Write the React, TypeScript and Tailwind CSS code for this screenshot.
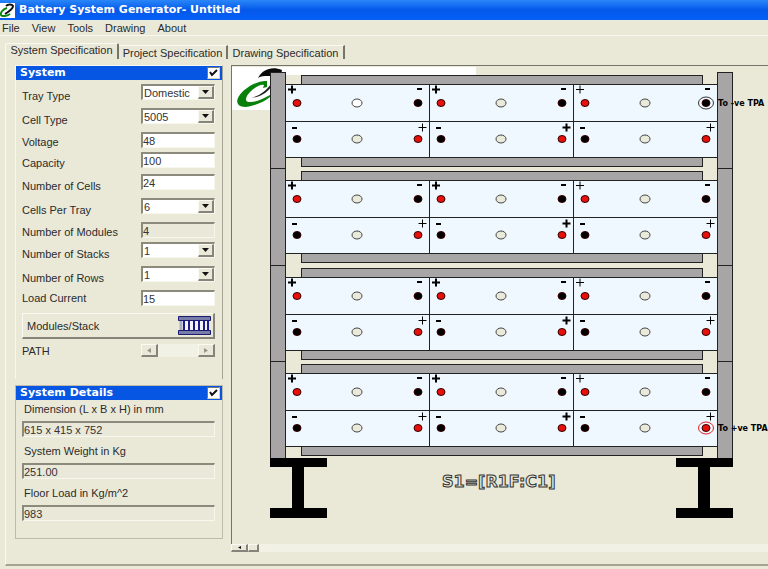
import React from "react";

type Field = {
  id: string;
  label: string;
  value: string;
  kind: "select" | "text" | "readonly";
  row: string;
};

const fields: Field[] = [
  { id: "tray-type", label: "Tray Type", value: "Domestic", kind: "select", row: "h-6" },
  { id: "cell-type", label: "Cell Type", value: "5005", kind: "select", row: "h-6" },
  { id: "voltage", label: "Voltage", value: "48", kind: "text", row: "h-5" },
  { id: "capacity", label: "Capacity", value: "100", kind: "text", row: "h-[22px]" },
  { id: "cells", label: "Number of Cells", value: "24", kind: "text", row: "h-6" },
  { id: "per-tray", label: "Cells Per Tray", value: "6", kind: "select", row: "h-6" },
  { id: "modules", label: "Number of Modules", value: "4", kind: "readonly", row: "h-5" },
  { id: "stacks", label: "Number of Stacks", value: "1", kind: "select", row: "h-6" },
  { id: "rows", label: "Number of Rows", value: "1", kind: "select", row: "h-6" },
  { id: "load", label: "Load Current", value: "15", kind: "text", row: "h-4" },
];

const details = [
  { id: "dimension", label: "Dimension (L x B x H) in mm", value: "615 x 415 x 752" },
  { id: "weight", label: "System Weight in Kg", value: "251.00" },
  { id: "floor", label: "Floor Load in Kg/m^2", value: "983" },
];

const sunken = "border-t-2 border-l-2 border-r border-b border-t-[#8c8a7c] border-l-[#8c8a7c] border-r-[#f8f7ee] border-b-[#f8f7ee]";
const raised = "border-t border-l border-r-2 border-b-2 border-t-[#fbfaf2] border-l-[#fbfaf2] border-r-[#85837a] border-b-[#85837a]";

function TitleIcon() {
  return (
    <svg viewBox="0 0 15 15" className="h-[15px] w-[15px]">
      <rect width="15" height="15" fill="#fff" />
      <path d="M7 5C3 6 0 10 1 12C2 14 7 13 10 11" fill="none" stroke="#0a860e" strokeWidth="2" />
      <path d="M6 3C8 1 12 1 13 3C13 5 10 8 5 11" fill="none" stroke="#111" strokeWidth="2" />
    </svg>
  );
}

function LogoShapes() {
  return (
    <g>
      <path
        d="M35 15C27 14 13 21 7 30C2 38 8 43 19 40C27 38 33 35 38 31L38 29C31 33 24 36 19 36C12 37 13 31 18 26C23 21 29 18 32 19L31 22L35 21Z"
        fill="#08800c"
      />
      <path d="M26 12C31 3 40 0 50 4L49 10H36C32 10 29 10 26 12Z" fill="#0a0a0a" />
      <path d="M19 32C27 30 34 25 39 18L39 21C34 28 27 31 19 32Z" fill="#222" />
    </g>
  );
}

function PanelHeader({ title, id }: { title: string; id: string }) {
  return (
    <div className="flex h-[14px] items-center justify-between bg-[#0655e3] pr-[2px] pl-1">
      <label htmlFor={id} className="font-['DejaVu_Sans',sans-serif] text-[11px] leading-[14px] font-bold text-white">
        {title}
      </label>
      <span className="relative h-3 w-[13px]">
        <input
          id={id}
          type="checkbox"
          defaultChecked
          className="peer block h-3 w-[13px] appearance-none border border-t-[#777] border-l-[#777] border-[#d5d2c2] bg-white"
        />
        <svg viewBox="0 0 13 12" className="pointer-events-none absolute inset-0 hidden h-3 w-[13px] peer-checked:block">
          <path d="M3 5L5 8L10 3" fill="none" stroke="#111" strokeWidth="2" />
        </svg>
      </span>
    </div>
  );
}

function FieldControl({ field }: { field: Field }) {
  if (field.kind === "select") {
    return (
      <span className="relative h-4 w-[74px]">
        <select id={field.id} className={`block h-4 w-full appearance-none bg-white pl-px text-[11px] leading-3 text-[#333] ${sunken}`}>
          <option>{field.value}</option>
        </select>
        <span className={`pointer-events-none absolute top-[2px] right-px flex h-[13px] w-4 items-center justify-center bg-[#eae8d8] ${raised}`}>
          <svg viewBox="0 0 7 4" className="h-1 w-[7px]">
            <path d="M0 0H7L3.5 4Z" fill="#111" />
          </svg>
        </span>
      </span>
    );
  }
  const readOnly = field.kind === "readonly";
  return (
    <input
      id={field.id}
      defaultValue={field.value}
      readOnly={readOnly}
      className={`block h-4 w-[74px] text-[11px] leading-3 text-[#333] ${readOnly ? "bg-[#eae8d8]" : "bg-white"} ${sunken}`}
    />
  );
}

function Plus({ x, y, bold }: { x: number; y: number; bold: boolean }) {
  return <path d={`M${x - 4} ${y}H${x + 4}M${x} ${y - 4}V${y + 4}`} stroke="#000" strokeWidth={bold ? 2 : 1} />;
}

function Cell({ x, y, flipped, hollow, bold }: { x: number; y: number; flipped: boolean; hollow: string; bold: boolean }) {
  const h = flipped ? 36 : 37;
  const cy = y + (flipped ? 18 : 19);
  return (
    <g>
      <rect x={x + 0.5} y={y + 0.5} width="144" height={h} fill="#f0f8ff" stroke="#222" />
      {flipped ? (
        <>
          <path d={`M${x + 7} ${y + 7}h5`} stroke="#000" strokeWidth="2" />
          <Plus x={x + 137.5} y={y + 6.5} bold={bold} />
        </>
      ) : (
        <>
          <Plus x={x + 7} y={y + 5.5} bold={bold} />
          <path d={`M${x + 132} ${y + 5}h5`} stroke="#000" strokeWidth="2" />
        </>
      )}
      <ellipse cx={x + 12} cy={cy} rx="4" ry="3.5" fill={flipped ? "#000" : "#e8100c"} stroke="#300" />
      <ellipse cx={x + 72} cy={cy} rx="5" ry="4" fill={hollow} stroke="#444" />
      <ellipse cx={x + 133} cy={cy} rx="4" ry="3.5" fill={flipped ? "#e8100c" : "#000"} stroke="#300" />
    </g>
  );
}

function Beam({ x }: { x: number }) {
  return <path d={`M${x} 392h57v9h-23v41h23v10h-57v-10h22v-41h-22Z`} fill="#000" />;
}

function RackDrawing() {
  const trays = [0, 96, 193, 289];
  const columns = [53, 197, 341];
  return (
    <svg className="block h-full w-full" role="img" aria-label="Rack elevation">
      <path d="M0 1H244V9H38V44H0Z" fill="#fff" />
      <LogoShapes />
      {trays.map((t, r) => (
        <g key={t}>
          <rect x="69.5" y={t + 9.5} width="401" height="10" fill="#a7a5a5" stroke="#222" />
          <rect x="69.5" y={t + 91.5} width="401" height="9" fill="#a7a5a5" stroke="#222" />
          {columns.map((c, i) => (
            <g key={c}>
              <Cell x={c} y={t + 18} flipped={false} hollow={r === 0 && i === 0 ? "#fff" : "#e9ead9"} bold={i < 2} />
              <Cell x={c} y={t + 55} flipped hollow="#e9ead9" bold={i === 1} />
            </g>
          ))}
        </g>
      ))}
      {[38, 485].map((x) => (
        <g key={x}>
          <rect x={x + 0.5} y="6.5" width="15" height="386" fill="#a7a5a5" stroke="#222" />
          <path d={`M${x} 102.5h16M${x} 199.5h16M${x} 295.5h16`} stroke="#222" />
        </g>
      ))}
      <Beam x={38} />
      <Beam x={444} />
      <ellipse cx="474" cy="37" rx="7.5" ry="6" fill="none" stroke="#333" />
      <ellipse cx="474" cy="362" rx="7.5" ry="6" fill="none" stroke="#e02020" />
      <g className="font-['DejaVu_Sans',sans-serif] font-bold">
        <text x="486" y="40" fontSize="8" fill="#000">To -ve TPA</text>
        <text x="486" y="365" fontSize="8" fill="#000">To +ve TPA</text>
        <text x="210" y="421" fontSize="16" fill="#eae9d8" stroke="#333">S1=[R1F:C1]</text>
      </g>
    </svg>
  );
}

export default function App() {
  return (
    <div className="flex min-h-screen flex-col overflow-hidden bg-[#eae9d8] font-['Liberation_Sans',Arial,sans-serif] text-[11px] leading-3 text-[#2b2b2b]">
      <header className="flex h-5 items-center gap-1 bg-linear-to-b from-[#2a86f8] via-[#0458ea] to-[#0560f6]">
        <TitleIcon />
        <h1 className="font-['DejaVu_Sans',sans-serif] text-[11px] leading-4 font-bold text-white">Battery System Generator- Untitled</h1>
      </header>
      <nav className="flex h-4 items-center gap-3 border-b border-[#f8f7ee] pl-[2px]">
        {["File", "View", "Tools", "Drawing", "About"].map((m) => (
          <button key={m} type="button">{m}</button>
        ))}
      </nav>

      <main className="flex flex-1 flex-col pt-[7px] pb-[3px] pl-[5px]">
        <div role="tablist" className="flex h-4 items-end">
          <button type="button" role="tab" aria-selected="true" className="h-4 w-[114px] rounded-t-xs border-t border-r-2 border-l border-t-[#fbfaf2] border-r-[#77756a] border-l-[#fbfaf2] pb-1">
            System Specification
          </button>
          <button type="button" role="tab" aria-selected="false" className="h-[14px] w-[109px] border-t border-r-2 border-t-[#fbfaf2] border-r-[#77756a]">
            Project Specification
          </button>
          <button type="button" role="tab" aria-selected="false" className="h-[14px] w-[117px] border-t border-r-2 border-t-[#fbfaf2] border-r-[#77756a]">
            Drawing Specification
          </button>
        </div>

        <div className="flex flex-1 border-b-2 border-l border-b-[#a5a393] border-l-[#fbfaf2]">
          <aside className="flex w-[225px] shrink-0 flex-col gap-[6px] pt-[6px] pr-2 pl-[9px]">
            <section className="h-[314px] border-t border-r border-l border-t-[#f8f7ee] border-r-[#a5a393] border-l-[#f8f7ee]">
              <PanelHeader title="System" id="show-system" />
              <div className="pt-1 pr-[7px] pl-[6px]">
                {fields.map((f) => (
                  <div key={f.id} className={`flex items-start justify-between ${f.row}`}>
                    <label htmlFor={f.id} className="self-center">{f.label}</label>
                    <FieldControl field={f} />
                  </div>
                ))}
                <button type="button" className={`mt-[7px] flex h-[26px] w-full items-center justify-between pr-[2px] pl-1 ${raised}`}>
                  Modules/Stack
                  <svg viewBox="0 0 33 19" className="h-[19px] w-[33px]">
                    <rect x="2" y="3" width="29" height="13" fill="#f4f4fa" />
                    <path d="M3 4V15" stroke="#a9adc4" strokeWidth="3" />
                    <path d="M6 4V15M11 4V15M16 4V15M21 4V15M26 4V15M30 4V15" stroke="#1c1c8c" strokeWidth="2" />
                    <path d="M.5 .5H32.5V4.5H.5ZM.5 14.5H32.5V18.5H.5Z" fill="#777da8" stroke="#191a70" />
                  </svg>
                </button>
                <div className="mt-[5px] flex h-[13px] items-center justify-between">
                  <span>PATH</span>
                  <div className="flex h-[13px] w-[74px] justify-between bg-[#f2f1e5]">
                    <button type="button" aria-label="Previous path" className={`flex w-[17px] items-center justify-center bg-[#eae8d8] ${raised}`}>
                      <svg viewBox="0 0 4 5" className="h-[5px] w-1"><path d="M4 0V5L0 2.5Z" fill="#999788" /></svg>
                    </button>
                    <button type="button" aria-label="Next path" className={`flex w-[17px] items-center justify-center bg-[#eae8d8] ${raised}`}>
                      <svg viewBox="0 0 4 5" className="h-[5px] w-1"><path d="M0 0V5L4 2.5Z" fill="#999788" /></svg>
                    </button>
                  </div>
                </div>
              </div>
            </section>

            <section className="h-[154px] border border-[#bdbbac]">
              <PanelHeader title="System Details" id="show-details" />
              <div className="flex flex-col gap-2 pt-[3px] pr-[7px] pl-[6px]">
                {details.map((d) => (
                  <div key={d.id} className="flex flex-col gap-[6px]">
                    <label htmlFor={d.id} className="pl-[2px]">{d.label}</label>
                    <input id={d.id} readOnly defaultValue={d.value} className={`block h-4 w-full bg-[#eae8d8] text-[11px] leading-3 text-[#333] ${sunken}`} />
                  </div>
                ))}
              </div>
            </section>
          </aside>

          <section className="flex min-w-0 flex-1 flex-col pt-[6px] pb-3">
            <div className="min-h-[479px] flex-1 overflow-hidden border-t border-l border-[#777569]">
              <RackDrawing />
            </div>
            <div className="flex h-2 bg-[#f2f1e5]">
              <button type="button" aria-label="Scroll left" className={`flex w-[17px] items-center justify-center bg-[#eae8d8] ${raised}`}>
                <svg viewBox="0 0 3 3" className="h-[3px] w-[3px]"><path d="M3 0V3L0 1.5Z" fill="#111" /></svg>
              </button>
              <button type="button" aria-label="Scroll position" className={`w-[11px] bg-[#eae8d8] ${raised}`} />
            </div>
          </section>
        </div>
      </main>
    </div>
  );
}
